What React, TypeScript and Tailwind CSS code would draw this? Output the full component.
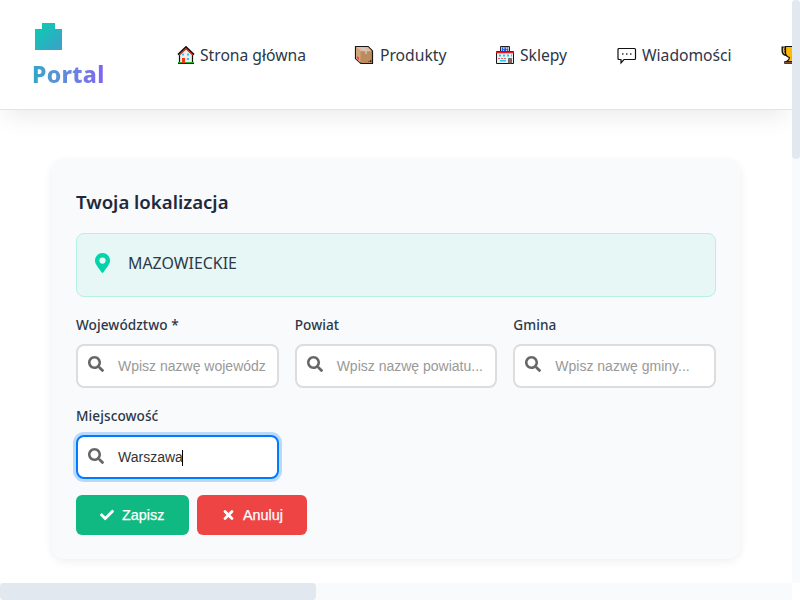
import React from 'react';

const sans = "font-['Noto_Sans',sans-serif]";
const arial = "font-['Liberation_Sans',Arial,sans-serif]";

const House = () => (
  <svg width="18" height="18" viewBox="0 0 18 18" className="mt-px shrink-0">
    <path d="M2.5 8.5 9 2.5l6.5 6V17h-13z" fill="#eee" stroke="#111" strokeWidth="1.2" />
    <path d="M1 8.7 9 1l8 7.7" fill="none" stroke="#111" strokeWidth="1.8" />
    <path d="M2.2 9 9 2.6 15.8 9" fill="none" stroke="#e13c20" strokeWidth="1.1" />
    <path d="M5 7.5h2v2H5zm5 0h2v2h-2zm0 4.5h2v2h-2z" fill="#36c5f4" />
    <path d="M5 12h3v5H5z" fill="#f03a17" />
    <path d="M1 16h4v1H1zm7 0h9v1H8z" fill="#20b229" />
    <path d="M1 17.5h16" stroke="#222" />
  </svg>
);

const Box = () => (
  <svg width="20" height="20" viewBox="0 0 20 20" className="-ml-px mr-px shrink-0">
    <path d="M1.5 1.5h12.5l4.5 4.5v12.5H7l-5.500-5z" fill="#bd8c5e" stroke="#171717" strokeWidth="1.2" strokeLinejoin="round" />
    <path d="M2 2h12l4 4.2H6.5z" fill="#dfbc9a" />
    <path d="m2 2 4.500 4.500V18L2 13.500z" fill="#cfa47a" />
    <path d="M6.500 2h2L13 6.200h-2z" fill="#c8d3db" />
    <path d="M11 6.200h2v2.500h-2z" fill="#c9bcae" />
    <path d="m3 11 2 2v2l-2-2z" fill="#ff2451" />
    <path d="M14.500 16.500h1m.5-1h1v1h-1" stroke="#333" fill="none" />
  </svg>
);

const Shop = () => (
  <svg width="20" height="20" viewBox="0 0 20 20" className="shrink-0">
    <path d="M1.500 6.500h17v12h-17z" fill="#e8f1f6" stroke="#151515" />
    <path d="M5.500 1.500h9v5h-9z" fill="#b9c3d4" stroke="#222" />
    <path d="M7 2.500h6v3.500H7z" fill="#2458ee" />
    <path d="M8 3.200h1v1m2-1h1v1M8 5.500h1m2 0h1" stroke="#fff" strokeWidth=".8" fill="none" />
    <path d="M1 6.500h18v1.800H1z" fill="#e51b1e" />
    <path d="M4 9.500h2v2H4zm4 0h2v2H8zm4 0h2v2h-2zm4 0h1v2h-1zM5 15h6v1.500H5z" fill="#20c6fa" />
    <path d="M3 13.500h9" stroke="#ff5546" strokeWidth="1.2" strokeDasharray="2 1" />
    <path d="M13.500 13.500h3v5h-3z" fill="#8a6555" stroke="#222" strokeWidth=".5" />
  </svg>
);

const Bubble = () => (
  <svg width="20" height="18" viewBox="0 0 20 18" className="mt-[2px] shrink-0">
    <path d="M2 1.500h15.500q1 0 1 1v9q0 1-1 1H7L4 16v-3.500H2q-1 0-1-1v-9q0-1 1-1z" fill="white" stroke="#111" strokeWidth="1.2" />
    <path d="M5 6.300h1.500v1.500H5zm4 0h1.500v1.500H9zm4 0h1.500v1.500H13z" fill="#333" />
  </svg>
);

const Trophy = () => (
  <svg width="20" height="20" viewBox="0 0 20 20" className="shrink-0">
    <path d="M5 3H2v3c0 2.500 1.500 3.500 4 3.500M15 3h3v3c0 2.500-1.500 3.500-4 3.500" fill="none" stroke="#111" strokeWidth="3" />
    <path d="M5 3H2.500v3c0 2 1 3 3.500 3" fill="none" stroke="#ffb900" strokeWidth="1.2" />
    <path d="M4.500 1.500h11v6c0 3-2 4.500-4 5 0 2 1.500 3 3 4h-9c1.500-1 3-2 3-4-2-.5-4-2-4-5z" fill="#ffb900" stroke="#111" strokeWidth="1.2" />
    <path d="M3.500 16.500h13v2h-13z" fill="#8a4b35" stroke="#111" strokeWidth=".7" />
  </svg>
);

const Search = ({ className }: { className: string }) => (
  <svg width="16" height="16" viewBox="0 0 512 512" fill="#666" className={`shrink-0 ${className}`}>
    <path d="M505 442.7 405.3 343c-4.5-4.5-10.6-7-17-7H372c27.6-35.3 44-79.7 44-128C416 93.1 322.9 0 208 0S0 93.1 0 208s93.1 208 208 208c48.3 0 92.7-16.4 128-44v16.3c0 6.4 2.5 12.5 7 17l99.7 99.7c9.4 9.4 24.6 9.4 33.9 0l28.3-28.3c9.4-9.4 9.4-24.6.1-34zM208 336c-70.7 0-128-57.2-128-128 0-70.7 57.2-128 128-128 70.7 0 128 57.2 128 128 0 70.7-57.2 128-128 128z" />
  </svg>
);

function Field({ label, text, focused = false }: { label: string; text: string; focused?: boolean }) {
  return (
    <div className="min-w-0">
      <div className={`${sans} mb-[11px] flex h-4 items-center whitespace-nowrap text-[13.6px] font-medium tracking-[0.08px] text-[#2d3748]`}>{label}</div>
      <div className={`${arial} flex h-11 items-center rounded-lg border-2 bg-white pl-[10px] text-[14px] ${focused ? 'border-[#007bff] text-[#333] shadow-[0_0_0_3px_rgba(0,123,255,0.25)]' : 'border-[#ddd] text-[#999]'}`}>
        <Search className={focused ? 'mb-[2px]' : 'mb-1'} />
        <div className="ml-[14px] flex items-center whitespace-nowrap pt-px">
          <span>{text}</span>
          {focused && <div className="-ml-px h-4 w-px bg-black" />}
        </div>
      </div>
    </div>
  );
}

export default function App() {
  return (
    <div className={`${sans} grid h-[600px] w-[800px] grid-cols-[792px_8px] grid-rows-[583px_17px] overflow-hidden bg-white`}>
      <div className="overflow-hidden">
        <header className="flex h-[110px] border-b border-[#e2e4e6] bg-white shadow-[0_10px_25px_-5px_rgba(0,0,0,0.09)]">
          <div className="w-[177px] shrink-0 pl-[33px] pt-[23px]">
            <svg width="29" height="27" className="ml-[2px] block">
              <defs>
                <linearGradient id="mark" x1="0" y1="0" x2="1" y2="1"><stop stopColor="#08ceb0" /><stop offset="1" stopColor="#3d9fcb" /></linearGradient>
              </defs>
              <path d="M0 6h7V0h13v6h7v21H0z" fill="url(#mark)" />
            </svg>
            <div className="-ml-px mt-[7px] w-[73px] whitespace-nowrap bg-linear-to-r from-[#32a5c8] to-[#8063f1] bg-clip-text text-[23px] leading-[34px] font-extrabold tracking-[0.3px] text-transparent">Portal</div>
          </div>
          <nav className="flex h-[110px] shrink-0 items-center whitespace-nowrap text-[15.7px] tracking-[-0.02px] text-[#2d3748]">
            <div className="flex w-[178px] shrink-0 items-center gap-[5px]"><House /><span className="pt-[2px]">Strona główna</span></div>
            <div className="flex w-[140px] shrink-0 items-center gap-[5px]"><Box /><span className="pt-[2px]">Produkty</span></div>
            <div className="flex w-[122px] shrink-0 items-center gap-[5px]"><Shop /><span className="pt-[2px]">Sklepy</span></div>
            <div className="flex w-[164px] shrink-0 items-center gap-[5px]"><Bubble /><span className="pt-[2px]">Wiadomości</span></div>
            <Trophy />
          </nav>
        </header>
        <main className="ml-[52px] mt-[50px] h-[399px] w-[688px] rounded-[12px] bg-[#f8fafc] px-6 pt-[30px] shadow-[0_2px_10px_rgba(0,0,0,0.07)]">
          <h2 className="flex h-6 items-center text-[18.6px] font-semibold text-[#1e293b]">Twoja lokalizacja</h2>
          <div className="mt-[19px] flex h-16 items-center rounded-lg border border-[#b8f0e3] bg-[#e6f7f5] pl-[18px] text-[15.9px] text-[#2d3748]">
            <svg width="15" height="20" viewBox="0 0 384 512" className="mb-[4px]" fill="#00d4aa"><path d="M172.3 501.7C27 291 0 269.4 0 192 0 86 86 0 192 0s192 86 192 192c0 77.4-27 99-172.3 309.7-9.5 13.8-29.9 13.8-39.4 0zM192 272a80 80 0 1 0 0-160 80 80 0 0 0 0 160z" /></svg>
            <span className="ml-[18px] pb-[3px]">MAZOWIECKIE</span>
          </div>
          <div className="mt-5 grid grid-cols-3 gap-x-4 gap-y-5">
            <Field label="Województwo *" text="Wpisz nazwę wojewódz" />
            <Field label="Powiat" text="Wpisz nazwę powiatu..." />
            <Field label="Gmina" text="Wpisz nazwę gminy..." />
            <Field label="Miejscowość" text="Warszawa" focused />
          </div>
          <div className={`${arial} mt-4 flex gap-2 text-[14.4px] font-normal text-white`}>
            <button className="flex h-10 w-[113px] items-center rounded-md bg-[#10b981] pl-6">
              <svg width="14" height="14" viewBox="0 0 512 512" fill="white"><path d="m174 439-166-166c-10-10-10-26 0-36l36-36c10-10 26-10 36 0l112 112L432 73c10-10 26-10 36 0l36 36c10 10 10 26 0 36L210 439c-10 10-26 10-36 0z" /></svg>
              <span className="ml-2 pt-[2px] [-webkit-text-stroke:0.25px_white]">Zapisz</span>
            </button>
            <button className="flex h-10 w-[110px] items-center rounded-md bg-[#ef4444] pl-[26px]">
              <svg width="11" height="14" viewBox="0 0 11 14"><path d="m2 3.5 7 7m0-7-7 7" stroke="white" strokeWidth="2.8" strokeLinecap="round" /></svg>
              <span className="ml-[9px] pt-[2px] [-webkit-text-stroke:0.25px_white]">Anuluj</span>
            </button>
          </div>
        </main>
      </div>
      <div className="bg-[#f8fafc]"><div className="h-[159px] rounded bg-[#e2e8f0]" /></div>
      <div className="bg-[#f8fafc]"><div className="h-[17px] w-[316px] rounded bg-[#e2e8f0]" /></div>
    </div>
  );
}
